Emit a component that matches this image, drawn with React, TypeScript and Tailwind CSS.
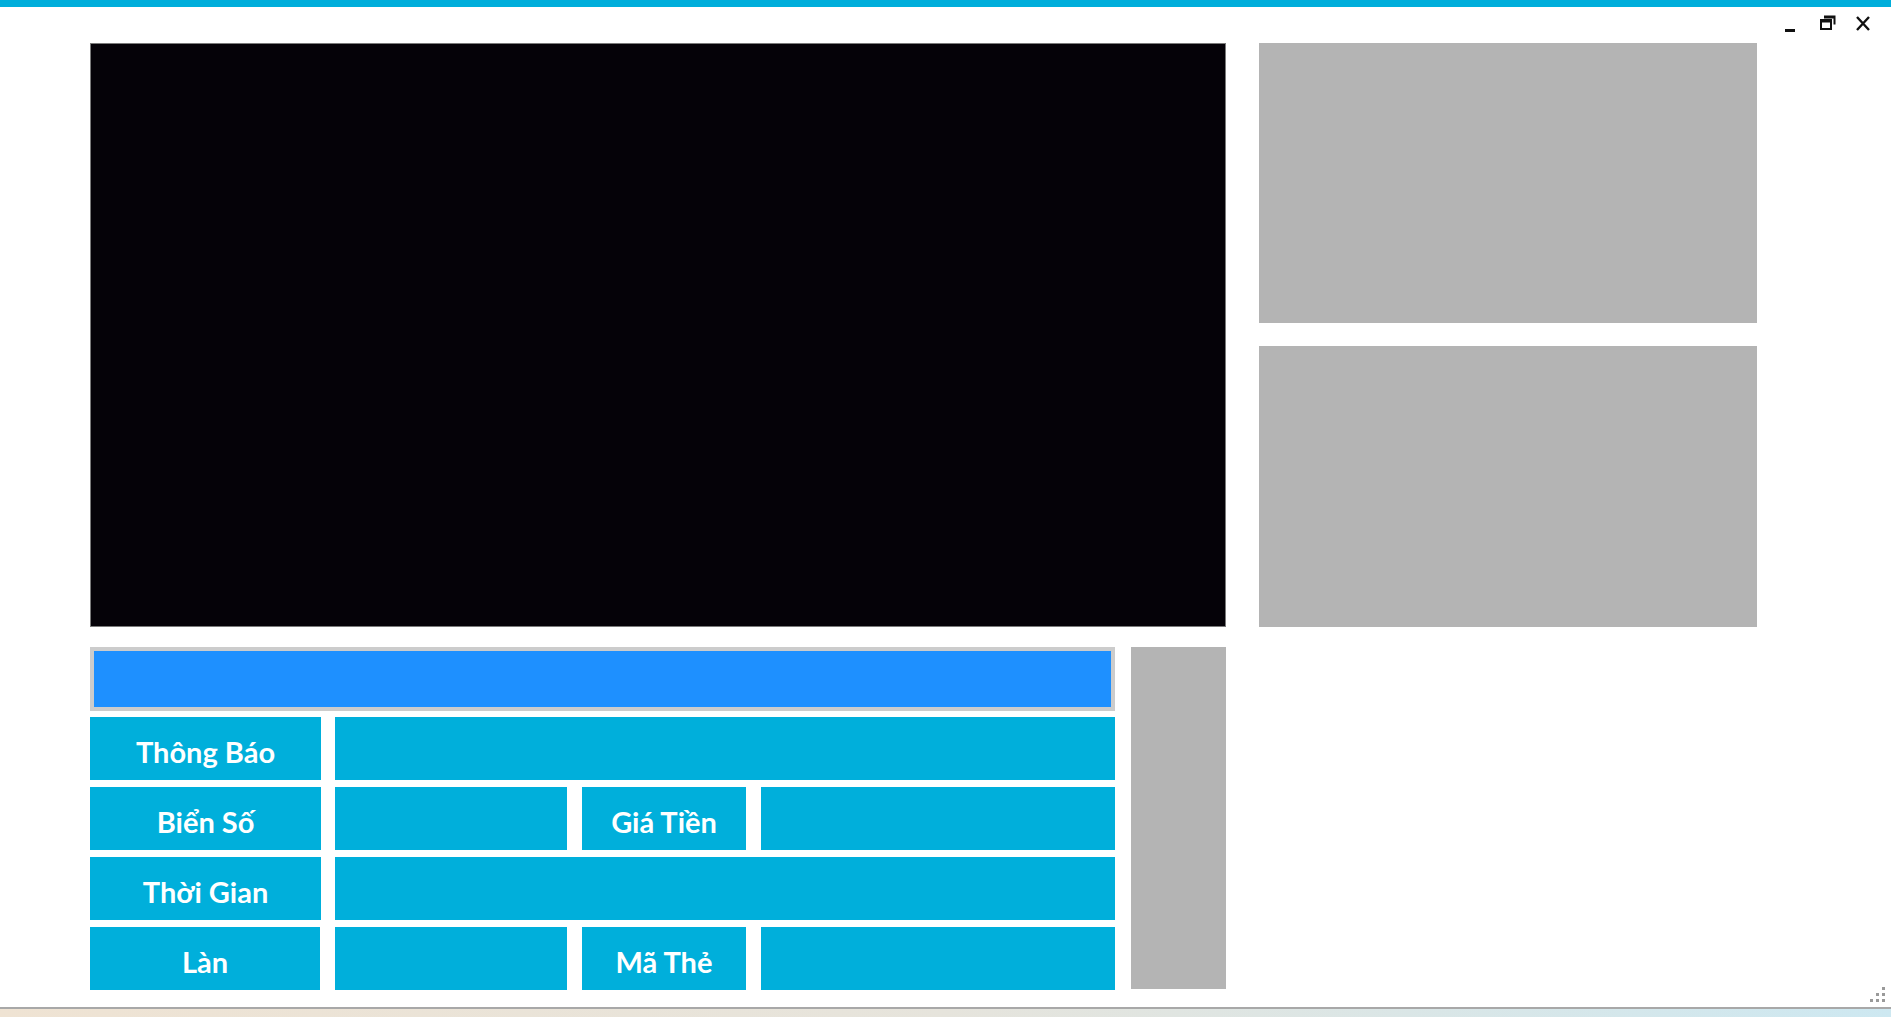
import React from "react";

const LABEL =
  "flex items-center justify-center pt-[5px] bg-[#00afdb] text-white text-[29px] font-bold leading-none";
const FIELD = "bg-[#00afdb]";

const WindowControls = () => (
  <div className="absolute top-0 right-0 flex items-start pr-[20px] pt-[3px] text-black">
    {/* minimize */}
    <svg width="14" height="22" viewBox="0 0 14 22" className="mr-[22px]">
      <rect x="2" y="19" width="10" height="3" fill="#111" />
    </svg>
    {/* restore */}
    <svg width="18" height="22" viewBox="0 0 18 22" className="mr-[18px]">
      <path d="M5 6.5h10.5v8" fill="none" stroke="#111" strokeWidth="2" />
      <rect x="2" y="10" width="10" height="9" fill="none" stroke="#111" strokeWidth="2" />
      <rect x="2" y="10" width="10" height="2.5" fill="#111" />
      <rect x="5" y="6" width="10.5" height="2.5" fill="#111" />
    </svg>
    {/* close */}
    <svg width="16" height="22" viewBox="0 0 16 22">
      <path d="M2 7l12 13M14 7L2 20" stroke="#111" strokeWidth="2.4" />
    </svg>
  </div>
);

const Grip = () => (
  <div className="absolute right-[6px] bottom-[5px] grid grid-cols-3 gap-[3px]">
    {[0, 0, 1, 0, 1, 1, 1, 1, 1].map((on, i) => (
      <span key={i} className={on ? "w-[3px] h-[3px] bg-[#9a9a9a]" : "w-[3px] h-[3px]"} />
    ))}
  </div>
);

export default function App() {
  return (
    <div
      className="w-[1891px] h-[1017px] bg-white overflow-hidden flex flex-col"
      style={{ fontFamily: "Lato, 'Noto Sans', sans-serif" }}
    >
      <div className="h-[7px] bg-[#00aedb] shrink-0" />

      <div className="relative h-[1000px] shrink-0">
        <WindowControls />

        <div className="flex pl-[90px] pt-[36px] gap-[33px]">
          {/* left column */}
          <div className="w-[1136px] flex flex-col">
            <div className="h-[584px] bg-[#050208] border border-[#7a7a7a]" />

            <div className="flex mt-[20px] gap-[16px]">
              <div className="w-[1025px] flex flex-col">
                <div className="h-[64px] border-[4px] border-[#cccccc] bg-[#1e90ff]" />

                <div className="flex flex-col gap-[7px] mt-[6px]">
                  <div className="flex h-[63px] gap-[14px]">
                    <div className={`${LABEL} w-[231px]`}>Thông Báo</div>
                    <div className={`${FIELD} flex-1`} />
                  </div>
                  <div className="flex h-[63px] gap-[14px]">
                    <div className={`${LABEL} w-[231px]`}>Biển Số</div>
                    <div className={`${FIELD} w-[232px]`} />
                    <div className={`${LABEL} w-[164px] ml-[1px]`}>Giá Tiền</div>
                    <div className={`${FIELD} flex-1 ml-[1px]`} />
                  </div>
                  <div className="flex h-[63px] gap-[14px]">
                    <div className={`${LABEL} w-[231px]`}>Thời Gian</div>
                    <div className={`${FIELD} flex-1`} />
                  </div>
                  <div className="flex h-[63px] gap-[14px]">
                    <div className={`${LABEL} w-[230px]`}>Làn</div>
                    <div className={`${FIELD} w-[232px] ml-[1px]`} />
                    <div className={`${LABEL} w-[164px] ml-[1px]`}>Mã Thẻ</div>
                    <div className={`${FIELD} flex-1 ml-[1px]`} />
                  </div>
                </div>
              </div>

              <div className="w-[95px] h-[342px] bg-[#b4b4b4]" />
            </div>
          </div>

          {/* right column */}
          <div className="w-[498px] flex flex-col gap-[23px]">
            <div className="h-[280px] bg-[#b4b4b4]" />
            <div className="h-[281px] bg-[#b4b4b4]" />
          </div>
        </div>

        <Grip />
      </div>

      <div className="h-[10px] shrink-0 border-t-[2px] border-[#a8a8a8] bg-gradient-to-r from-[#efe3d3] via-[#e6e4dc] to-[#cde8f1]" />
    </div>
  );
}
